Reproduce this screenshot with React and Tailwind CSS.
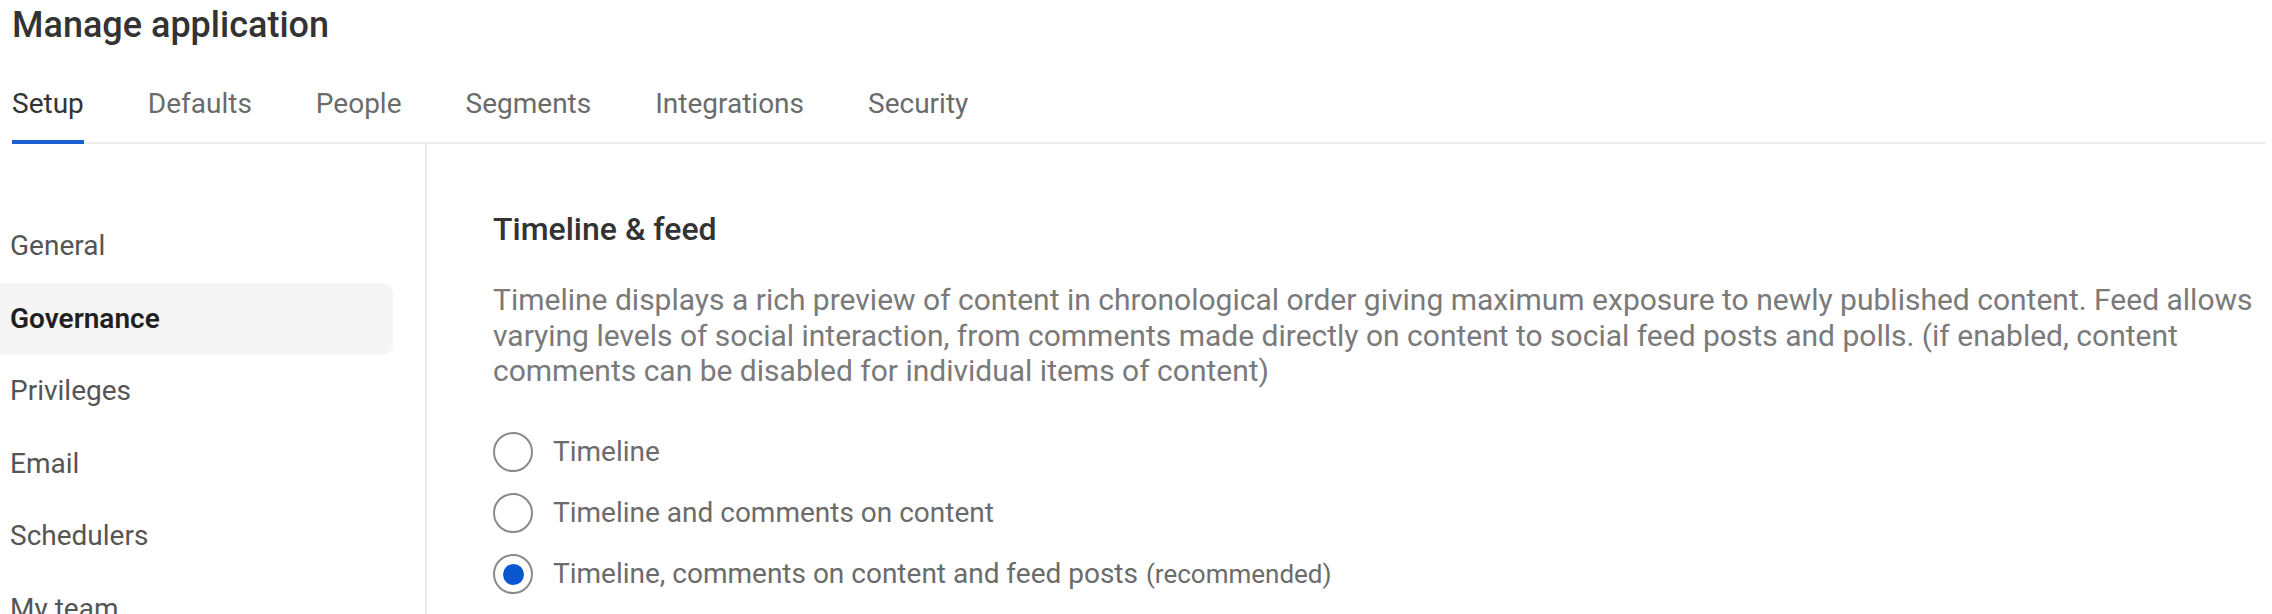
const tabs = ["Setup", "Defaults", "People", "Segments", "Integrations", "Security"];

const sideItems = ["General", "Governance", "Privileges", "Email", "Schedulers", "My team"];

const options = [
  { label: "Timeline" },
  { label: "Timeline and comments on content" },
  { label: "Timeline, comments on content and feed posts", note: "(recommended)", checked: true },
];

function Radio({ checked }) {
  return (
    <span className="flex h-[40px] w-[40px] shrink-0 items-center justify-center rounded-full border-2 border-[#8a8a8a] bg-white">
      {checked && <span className="h-[21px] w-[21px] rounded-full bg-[#0b57d0]" />}
    </span>
  );
}

export default function App() {
  return (
    <div className="h-[614px] w-[2272px] overflow-hidden bg-white pr-[6px] font-['Roboto',sans-serif]">
      {/* header */}
      <div className="pl-[12px]">
        <h1 className="pt-[5px] text-[36px] font-medium leading-[40px] text-[#333]">
          Manage application
        </h1>

        <nav className="mt-[43px] flex gap-[64px] border-b-2 border-[#ececec]">
          {tabs.map((t, i) => (
            <div
              key={t}
              className={
                i === 0
                  ? "-mb-[2px] border-b-4 border-[#1a5fd0] pb-[20px] text-[28px] leading-[32px] text-[#333]"
                  : "-mb-[2px] border-b-4 border-transparent pb-[20px] text-[28px] leading-[32px] text-[#6b6b6b]"
              }
            >
              {t}
            </div>
          ))}
        </nav>
      </div>

      <div className="flex">
        {/* side menu */}
        <aside className="h-[480px] w-[427px] shrink-0 border-r-2 border-[#ececec] pt-[66px]">
          <ul className="flex flex-col">
            {sideItems.map((s) => (
              <li
                key={s}
                className={
                  s === "Governance"
                    ? "flex h-[72.5px] w-[393px] items-center rounded-r-[10px] bg-[#f5f5f5] pl-[10px] text-[28px] font-semibold text-[#1f1f1f]"
                    : "flex h-[72.5px] w-[393px] items-center pl-[10px] text-[28px] text-[#555]"
                }
              >
                {s}
              </li>
            ))}
          </ul>
        </aside>

        {/* content */}
        <main className="flex-1 pl-[66px] pt-[66px]">
          <h2 className="text-[32px] font-medium leading-[38px] text-[#333]">Timeline &amp; feed</h2>
          <p className="mt-[34px] text-[30px] leading-[35.5px] text-[#7a7a7a]">
            Timeline displays a rich preview of content in chronological order giving maximum exposure to newly
            published content. Feed allows varying levels of social interaction, from comments made directly on
            content to social feed posts and polls. (if enabled, content comments can be disabled for individual
            items of content)
          </p>

          <div className="mt-[33px] flex flex-col">
            {options.map((o) => (
              <label key={o.label} className="flex h-[61px] items-center gap-[20px] text-[28px] text-[#6b6b6b]">
                <Radio checked={o.checked} />
                <span>
                  {o.label}
                  {o.note && <span className="ml-[8px] text-[26px]">{o.note}</span>}
                </span>
              </label>
            ))}
          </div>
        </main>
      </div>
    </div>
  );
}
